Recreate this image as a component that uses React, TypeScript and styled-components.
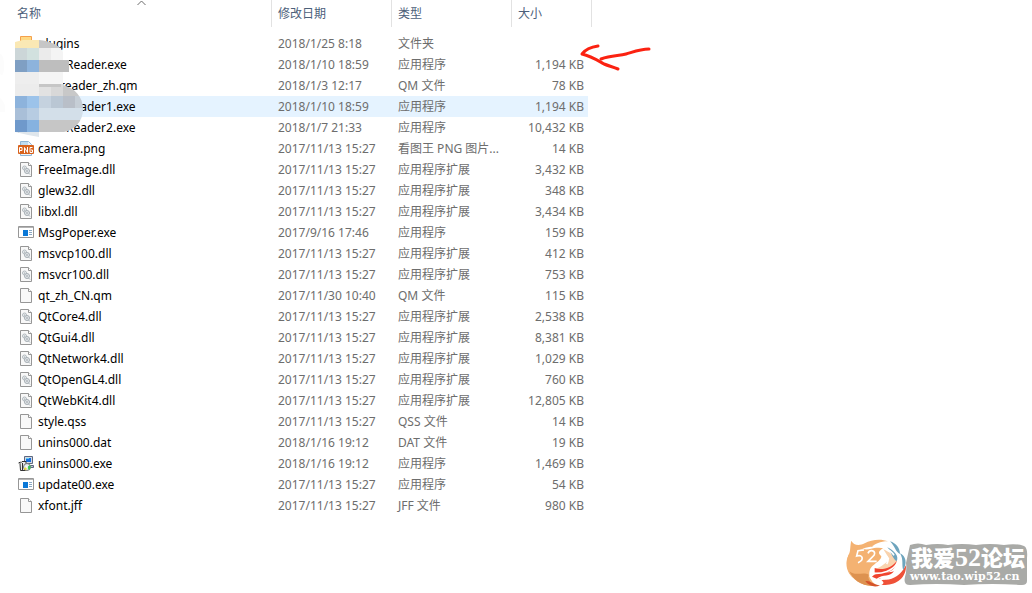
import React from "react";
import styled, { createGlobalStyle, css } from "styled-components";

const Global = createGlobalStyle`
  html, body, #root { margin: 0; min-height: 100%; background: #fff; }
  body { font-family: "Noto Sans", "Noto Sans CJK SC", sans-serif; font-size: 12px; color: #6d6d6d; }
`;

type Kind = "folder" | "app" | "file" | "dll" | "png" | "setup";

interface Entry {
  name: string;
  date: string;
  type: string;
  size: string;
  kind: Kind;
  selected?: boolean;
  masked?: number;
}

const entries: Entry[] = [
  { name: "plugins", date: "2018/1/25 8:18", type: "文件夹", size: "", kind: "folder" },
  { name: "Reader.exe", date: "2018/1/10 18:59", type: "应用程序", size: "1,194 KB", kind: "app", masked: 28 },
  { name: "reader_zh.qm", date: "2018/1/3 12:17", type: "QM 文件", size: "78 KB", kind: "file", masked: 22 },
  { name: "Reader1.exe", date: "2018/1/10 18:59", type: "应用程序", size: "1,194 KB", kind: "app", selected: true, masked: 28 },
  { name: "Reader2.exe", date: "2018/1/7 21:33", type: "应用程序", size: "10,432 KB", kind: "app", masked: 28 },
  { name: "camera.png", date: "2017/11/13 15:27", type: "看图王 PNG 图片...", size: "14 KB", kind: "png" },
  { name: "FreeImage.dll", date: "2017/11/13 15:27", type: "应用程序扩展", size: "3,432 KB", kind: "dll" },
  { name: "glew32.dll", date: "2017/11/13 15:27", type: "应用程序扩展", size: "348 KB", kind: "dll" },
  { name: "libxl.dll", date: "2017/11/13 15:27", type: "应用程序扩展", size: "3,434 KB", kind: "dll" },
  { name: "MsgPoper.exe", date: "2017/9/16 17:46", type: "应用程序", size: "159 KB", kind: "app" },
  { name: "msvcp100.dll", date: "2017/11/13 15:27", type: "应用程序扩展", size: "412 KB", kind: "dll" },
  { name: "msvcr100.dll", date: "2017/11/13 15:27", type: "应用程序扩展", size: "753 KB", kind: "dll" },
  { name: "qt_zh_CN.qm", date: "2017/11/30 10:40", type: "QM 文件", size: "115 KB", kind: "file" },
  { name: "QtCore4.dll", date: "2017/11/13 15:27", type: "应用程序扩展", size: "2,538 KB", kind: "dll" },
  { name: "QtGui4.dll", date: "2017/11/13 15:27", type: "应用程序扩展", size: "8,381 KB", kind: "dll" },
  { name: "QtNetwork4.dll", date: "2017/11/13 15:27", type: "应用程序扩展", size: "1,029 KB", kind: "dll" },
  { name: "QtOpenGL4.dll", date: "2017/11/13 15:27", type: "应用程序扩展", size: "760 KB", kind: "dll" },
  { name: "QtWebKit4.dll", date: "2017/11/13 15:27", type: "应用程序扩展", size: "12,805 KB", kind: "dll" },
  { name: "style.qss", date: "2017/11/13 15:27", type: "QSS 文件", size: "14 KB", kind: "file" },
  { name: "unins000.dat", date: "2018/1/16 19:12", type: "DAT 文件", size: "19 KB", kind: "file" },
  { name: "unins000.exe", date: "2018/1/16 19:12", type: "应用程序", size: "1,469 KB", kind: "setup" },
  { name: "update00.exe", date: "2017/11/13 15:27", type: "应用程序", size: "54 KB", kind: "app" },
  { name: "xfont.jff", date: "2017/11/13 15:27", type: "JFF 文件", size: "980 KB", kind: "file" },
];

const Page = styled.main`
  position: relative;
  min-height: 100vh;
`;

const FileTable = styled.table`
  table-layout: fixed;
  width: 592px;
  border-collapse: separate;
  border-spacing: 0;
`;

const Column = styled.col<{ $width: number }>`
  width: ${(p) => p.$width}px;
`;

const HeadCell = styled.th<{ $first?: boolean }>`
  position: relative;
  box-sizing: border-box;
  height: 27px;
  padding: 0 0 0 ${(p) => (p.$first ? 17 : 6)}px;
  border-right: 1px solid #e2e2e2;
  color: #4c607a;
  font-weight: 400;
  line-height: 26px;
  text-align: left;
`;

const SortMark = styled.svg`
  position: absolute;
  top: 0;
  left: 136px;
`;

const Body = styled.tbody`
  &::before { content: ""; display: block; height: 6px; }
`;

const Cell = styled.td<{ $selected?: boolean }>`
  box-sizing: border-box;
  height: 21px;
  padding: 0 0 0 6px;
  line-height: 21px;
  white-space: nowrap;
  background: ${(p) => (p.$selected ? "#e5f3ff" : "transparent")};
`;

const NameCell = styled(Cell)`
  padding-left: 2px;
  border-left: 16px solid #fff;
  color: #000;
`;

const SizeCell = styled(Cell)`
  padding-right: 4px;
  border-right: 4px solid #fff;
  text-align: right;
`;

const FileLabel = styled.span`
  display: flex;
  align-items: center;
  gap: 4px;
  height: 21px;
`;

const FileName = styled.span<{ $masked?: number }>`
  padding-left: ${(p) => p.$masked ?? 0}px;
`;

const overlay = css`
  position: absolute;
  pointer-events: none;
`;

const Mosaic = styled.svg`
  ${overlay}
  left: 0;
  top: 32px;
`;

const Arrow = styled.svg`
  ${overlay}
  left: 576px;
  top: 40px;
`;

const Watermark = styled.svg`
  ${overlay}
  right: 4px;
  bottom: 4px;
`;

const SiteName = styled.text`
  font: 900 22px "Noto Sans CJK SC", sans-serif;
  fill: #fff;
`;

const SiteNumber = styled.tspan`
  font: 700 26px "Liberation Serif", serif;
`;

const SiteAddress = styled.text`
  font: 700 11px "DejaVu Serif", serif;
  fill: #fff;
`;

function Sheet() {
  return (
    <>
      <path d="M2.5.5h8l3 3v11h-11z" fill="#f8f8f8" stroke="#969696" />
      <path d="M10.5.5v3h3" fill="#fff" stroke="#969696" />
    </>
  );
}

function FileIcon({ kind }: { kind: Kind }) {
  return (
    <svg width="16" height="16" viewBox="0 0 16 16" aria-hidden="true">
      {kind === "folder" && <path d="M2.500.5h11v14h-11z" fill="#ffd983" stroke="#f5a04c" />}
      {kind === "file" && <Sheet />}
      {kind === "dll" && (
        <>
          <Sheet />
          <circle cx="6.500" cy="6" r="2" fill="#eceff1" stroke="#b3babf" />
          <circle cx="9" cy="9" r="2.500" fill="#e3e7ea" stroke="#a5adb3" />
          <circle cx="6.500" cy="6" r=".6" fill="#8d959b" />
          <circle cx="9" cy="9" r=".8" fill="#8d959b" />
          <path d="M10.500 11l1.500 1.500" stroke="#a5adb3" />
        </>
      )}
      {kind === "app" && (
        <>
          <path d="M.5 1.500h15v11H.5z" fill="#fff" stroke="#979797" />
          <path d="M1 2h14v1H1z" fill="#b4b4b4" />
          <path d="M5 5h5v6H5z" fill="#0b78d7" />
          <path d="M11 5.500h3M11 7.500h3M11 9.500h3" stroke="#8aa9c4" />
        </>
      )}
      {kind === "png" && (
        <>
          <path d="M2.500.5h8l3 3v11h-11z" fill="#eaf4fb" stroke="#8fb6d6" />
          <path d="M3 1h7v3H3z" fill="#bfdcf1" />
          <rect y="4" width="16" height="9" rx="1" fill="#d8621d" />
          <path d="M1.500 11.500v-5h2.500v3H2M6.500 12V6.500l3 5V6M14.500 6.500H12v5h2.500v-2.500H13" fill="none" stroke="#fff" />
        </>
      )}
      {kind === "setup" && (
        <>
          <path d="M6.500.5h8v7h-8z" fill="#d3d8e3" stroke="#5d6880" />
          <path d="M8 2h5v4H8z" fill="#176fe0" />
          <path d="M8 2h3v1H8z" fill="#5fd0f5" />
          <path d="M11.500 9.500h4v2h-4z" fill="#bcc3d1" stroke="#5d6880" />
          <path d="M2 7.500l2-2h4v9H2.500z" fill="#ececec" stroke="#333" />
          <path d="M.5 7l2-1M4.500 7v7" stroke="#333" />
          <circle cx="9" cy="11" r="3.500" fill="#e8eef2" stroke="#777" />
          <path d="M9 11l3-2a3.500 3.500 0 0 1-1 5z" fill="#3dc45b" />
          <path d="M9 11l-3 1a3 3 0 0 0 2 2.500z" fill="#f2dc3b" />
          <circle cx="9" cy="11" r="1" fill="#fff" />
        </>
      )}
    </svg>
  );
}

const tiles: [number, number, number, number, string][] = [
  [15, 8, 24, 8, "#fae8b4"],
  [39, 8, 24, 8, "#c6c6c6"],
  [15, 16, 12, 12, "#ccd6d8"],
  [27, 16, 12, 12, "#d2e1df"],
  [39, 16, 12, 12, "#ebebeb"],
  [51, 16, 12, 12, "#f4f4f4"],
  [15, 28, 12, 12, "#7f9fc3"],
  [27, 28, 12, 12, "#8db3dc"],
  [39, 28, 30, 12, "#bebebe"],
  [15, 40, 24, 12, "#eeeeee"],
  [39, 40, 24, 12, "#f5f5f5"],
  [15, 52, 24, 12, "#ececec"],
  [39, 52, 12, 12, "#e2e2e2"],
  [51, 52, 12, 12, "#d8d8d8"],
  [63, 52, 20, 12, "#c8c8c8"],
  [39, 52, 22, 3, "#c6c6c6"],
  [15, 64, 12, 12, "#8db3dc"],
  [27, 64, 12, 12, "#9cc3ea"],
  [39, 64, 12, 12, "#c5d2df"],
  [51, 64, 12, 12, "#bac7d4"],
  [63, 64, 12, 12, "#b9bfc8"],
  [75, 64, 9, 12, "#c6ced6"],
  [15, 76, 12, 12, "#a9bfd8"],
  [27, 76, 12, 12, "#b7cce2"],
  [39, 76, 45, 12, "#d3dfe9"],
  [15, 88, 12, 12, "#6f99cb"],
  [27, 88, 12, 12, "#86b2e0"],
  [39, 88, 45, 12, "#c6c6c6"],
  [15, 100, 24, 5, "#dfe6ec"],
];

export default function App() {
  return (
    <Page>
      <Global />
      <FileTable>
        <colgroup>
          <Column $width={272} />
          <Column $width={120} />
          <Column $width={120} />
          <Column $width={80} />
        </colgroup>
        <thead>
          <tr>
            <HeadCell $first>
              名称
              <SortMark width="11" height="6" aria-hidden="true">
                <path d="M1.500 5L5.500 1l4 4" fill="none" stroke="#6d6d6d" />
              </SortMark>
            </HeadCell>
            <HeadCell>修改日期</HeadCell>
            <HeadCell>类型</HeadCell>
            <HeadCell>大小</HeadCell>
          </tr>
        </thead>
        <Body>
          {entries.map((e) => (
            <tr key={e.name}>
              <NameCell $selected={e.selected}>
                <FileLabel>
                  <FileIcon kind={e.kind} />
                  <FileName $masked={e.masked}>{e.name}</FileName>
                </FileLabel>
              </NameCell>
              <Cell $selected={e.selected}>{e.date}</Cell>
              <Cell $selected={e.selected}>{e.type}</Cell>
              <SizeCell $selected={e.selected}>{e.size}</SizeCell>
            </tr>
          ))}
        </Body>
      </FileTable>
      <Mosaic width="90" height="110" aria-hidden="true">
        <defs>
          <clipPath id="smear">
            <path d="M15 10Q27 6 39 8C50 9 60 13 63 20V28H69V40H63V53C75 56 83 65 83 77C83 90 74 98 64 100H39V105Q27 103 15 100Z" />
          </clipPath>
        </defs>
        <path d="M0 22q4 0 4 12t-4 8zM0 66q6 4 5 14H0z" fill="#fcfcfc" />
        <g clipPath="url(#smear)">
          {tiles.map(([x, y, w, h, fill], i) => (
            <rect key={i} x={x} y={y} width={w} height={h} fill={fill} shapeRendering="crispEdges" />
          ))}
        </g>
      </Mosaic>
      <Arrow width="76" height="32" aria-hidden="true">
        <g fill="none" stroke="#fb2211" strokeWidth="3" strokeLinecap="round" strokeLinejoin="round">
          <path d="M22 6C15 7 9 10 6 14c9 2 15 6 22 10 5 2 9 3 14 5" />
          <path d="M25 19c10-4 18-3 25-5s14-5 23-5" />
        </g>
      </Arrow>
      <Watermark width="182" height="52" viewBox="0 0 182 52" role="img" aria-label="我爱52论坛 www.tao.wip52.cn">
        <g transform="translate(-2 -3) scale(.3333)">
          <path d="M22 20C28 34 46 36 62 28C82 16 112 14 132 22C108 22 92 30 86 38C66 38 48 46 40 54C28 58 22 66 16 78C10 98 16 120 28 132C10 118 0 90 14 62C20 54 18 34 22 20Z" fill="#f4b272" />
          <path d="M14 62C26 50 40 48 62 46C78 48 96 36 118 42C104 50 100 58 112 66C112 78 98 84 88 94C74 104 76 120 76 128C86 146 92 152 104 154C60 162 26 140 14 112C6 94 8 76 14 62Z" fill="#f4b272" />
          <path d="M16 112C34 128 58 112 74 122C70 136 82 150 96 155C56 160 26 138 16 112Z" fill="#dd9250" />
          <path d="M64 142C74 136 88 152 108 154C92 162 76 156 64 142Z" fill="#d5532a" />
          <path d="M118 46C136 54 150 64 158 80C150 106 122 112 92 106C112 98 128 86 136 74Z" fill="#f9d3ae" />
          <path d="M92 102C116 112 148 98 158 80C158 108 128 124 92 116Z" fill="#f0442f" />
          <path d="M104 132C132 146 166 132 186 94C188 134 152 158 112 152C124 148 118 142 104 132Z" fill="#ef5138" />
          <path d="M84 128C100 110 130 120 150 112C138 130 118 120 98 134Z" fill="#f0442f" />
          <path d="M138 22C156 28 168 42 168 60C154 54 154 38 138 22ZM168 58C186 66 190 88 178 108C172 94 180 78 168 58ZM130 40C150 50 166 66 158 82C144 72 142 54 130 40Z" fill="#6da4bd" />
          <path d="M86 38C112 34 138 44 150 64M108 60C128 60 138 74 128 90M160 86C148 112 112 120 86 118M92 142C120 132 150 132 172 106M166 64C174 78 172 88 166 98" fill="none" stroke="#fff" strokeWidth="5" />
          <path d="M60 48L42 50L38 66C56 60 62 78 42 86M72 58C78 44 98 50 90 64L72 82H98" fill="none" stroke="#fff" strokeWidth="5" />
        </g>
        <path d="M64 8q8-3 16 0q12-2 22 0q14-2 28 0q14-2 28 0q12-2 20 1q4 2 3 12v23q0 4-5 4q-30-2-58 0q-28-2-54 0q-7 0-5-8q2-6 1-14z" fill="#a9aaa7" />
        <SiteName x="65" y="29">
          我爱<SiteNumber>52</SiteNumber>论坛
        </SiteName>
        <SiteAddress x="64" y="43">www.tao.wip52.cn</SiteAddress>
      </Watermark>
    </Page>
  );
}
